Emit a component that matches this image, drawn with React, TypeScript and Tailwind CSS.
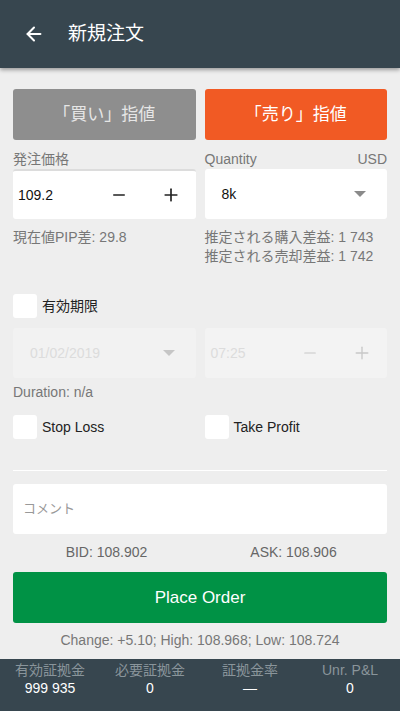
import { ArrowLeft, Minus, Plus } from "lucide-react"

const font = { fontFamily: "'Liberation Sans', 'Noto Sans CJK JP', sans-serif" }

function Caret({ light }: { light?: boolean }) {
  return (
    <svg width="14" height="8" viewBox="0 0 14 8">
      <path d="M1 1 L13 1 L7 7 Z" fill={light ? "#c6c6c6" : "#8a8a8a"} />
    </svg>
  )
}

function Check({ label }: { label: string }) {
  return (
    <div className="flex items-center">
      <div className="w-6 h-6 bg-white rounded-[3px] mr-[5px]"></div>
      <span className="text-[14px] text-[#222]">{label}</span>
    </div>
  )
}

export default function App() {
  // footer stats
  const stats = [
    { label: "有効証拠金", value: "999 935" },
    { label: "必要証拠金", value: "0" },
    { label: "証拠金率", value: "—" },
    { label: "Unr. P&L", value: "0" },
  ]

  return (
    <div className="w-[400px] h-[711px] bg-[#eeeeee] flex flex-col overflow-hidden" style={font}>
      {/* Header */}
      <div className="h-[68px] bg-[#37464f] flex items-center shrink-0 shadow-[0_2px_4px_rgba(0,0,0,0.35)] z-10">
        <ArrowLeft className="w-[22px] h-[22px] text-white ml-[23px]" strokeWidth={2.2} />
        <span className="text-white text-[19px] ml-[23px]">新規注文</span>
      </div>

      <div className="flex-1 px-[13px] pt-[21px]">
        {/* Buy / Sell */}
        <div className="grid grid-cols-2 gap-[9px]">
          <div className="h-[51px] bg-[#8e8e8e] rounded-[3px] flex items-center justify-center text-[#e6e6e6] text-[17px]">
            「買い」指値
          </div>
          <div className="h-[51px] bg-[#f15a24] rounded-[3px] flex items-center justify-center text-white text-[17px]">
            「売り」指値
          </div>
        </div>

        {/* Price / Quantity */}
        <div className="grid grid-cols-2 gap-[9px] mt-[9px]">
          <div>
            <div className="text-[14px] text-[#777] h-[20px] leading-[20px]">発注価格</div>
            <div className="h-[50px] bg-white rounded-[3px] border-t-2 border-[#dcdcdc] flex items-center pl-[5px]">
              <span className="text-[14px] text-[#111] flex-1">109.2</span>
              <Minus className="w-[18px] h-[18px] text-[#222] mr-[33px]" strokeWidth={2} />
              <Plus className="w-[20px] h-[20px] text-[#222] mr-[15px]" strokeWidth={2} />
            </div>
            <div className="text-[14px] text-[#777] mt-[9px] leading-[19px]">現在値PIP差: 29.8</div>
          </div>
          <div>
            <div className="text-[14px] text-[#777] h-[20px] leading-[20px] flex justify-between">
              <span>Quantity</span>
              <span>USD</span>
            </div>
            <div className="h-[50px] bg-white rounded-[3px] flex items-center pl-[17px] pr-[20px]">
              <span className="text-[14px] text-[#111] flex-1">8k</span>
              <Caret />
            </div>
            <div className="text-[14px] text-[#777] mt-[9px] leading-[19px]">
              <div>推定される購入差益: 1 743</div>
              <div>推定される売却差益: 1 742</div>
            </div>
          </div>
        </div>

        {/* Expiry */}
        <div className="mt-[28px]">
          <Check label="有効期限" />
        </div>
        <div className="grid grid-cols-2 gap-[9px] mt-[10px]">
          <div className="h-[50px] bg-[#f2f2f2] rounded-[3px] flex items-center pl-[17px] pr-[20px]">
            <span className="text-[14px] text-[#dcdcdc] flex-1">01/02/2019</span>
            <Caret light />
          </div>
          <div className="h-[50px] bg-[#f3f3f3] rounded-[3px] flex items-center pl-[6px]">
            <span className="text-[14px] text-[#dcdcdc] flex-1">07:25</span>
            <Minus className="w-[18px] h-[18px] text-[#c8c8c8] mr-[33px]" strokeWidth={1.6} />
            <Plus className="w-[20px] h-[20px] text-[#c8c8c8] mr-[15px]" strokeWidth={1.6} />
          </div>
        </div>
        <div className="text-[14px] text-[#777] mt-[5px] leading-[19px]">Duration: n/a</div>

        {/* SL / TP */}
        <div className="grid grid-cols-2 gap-[9px] mt-[13px]">
          <Check label="Stop Loss" />
          <Check label="Take Profit" />
        </div>

        <div className="h-[1px] bg-white mt-[31px]"></div>

        {/* Comment */}
        <div className="h-[50px] bg-white rounded-[3px] mt-[13px] flex items-center px-[10px]">
          <span className="text-[13px] text-[#999]">コメント</span>
        </div>

        <div className="grid grid-cols-2 text-[14px] text-[#666] mt-[9px] text-center leading-[19px]">
          <span>BID: 108.902</span>
          <span>ASK: 108.906</span>
        </div>

        <div className="h-[51px] bg-[#009245] rounded-[3px] mt-[10px] flex items-center justify-center text-white text-[17px]">
          Place Order
        </div>

        <div className="text-[14px] text-[#777] text-center mt-[8px] leading-[19px]">
          Change: +5.10; High: 108.968; Low: 108.724
        </div>
      </div>

      {/* Footer */}
      <div className="h-[52px] bg-[#37464f] grid grid-cols-4 shrink-0 pt-[2px]">
        {stats.map((s) => (
          <div key={s.label} className="flex flex-col items-center">
            <span className="text-[14px] text-[#8a959b] leading-[18px]">{s.label}</span>
            <span className="text-[14px] text-white leading-[18px]">{s.value}</span>
          </div>
        ))}
      </div>
    </div>
  )
}
